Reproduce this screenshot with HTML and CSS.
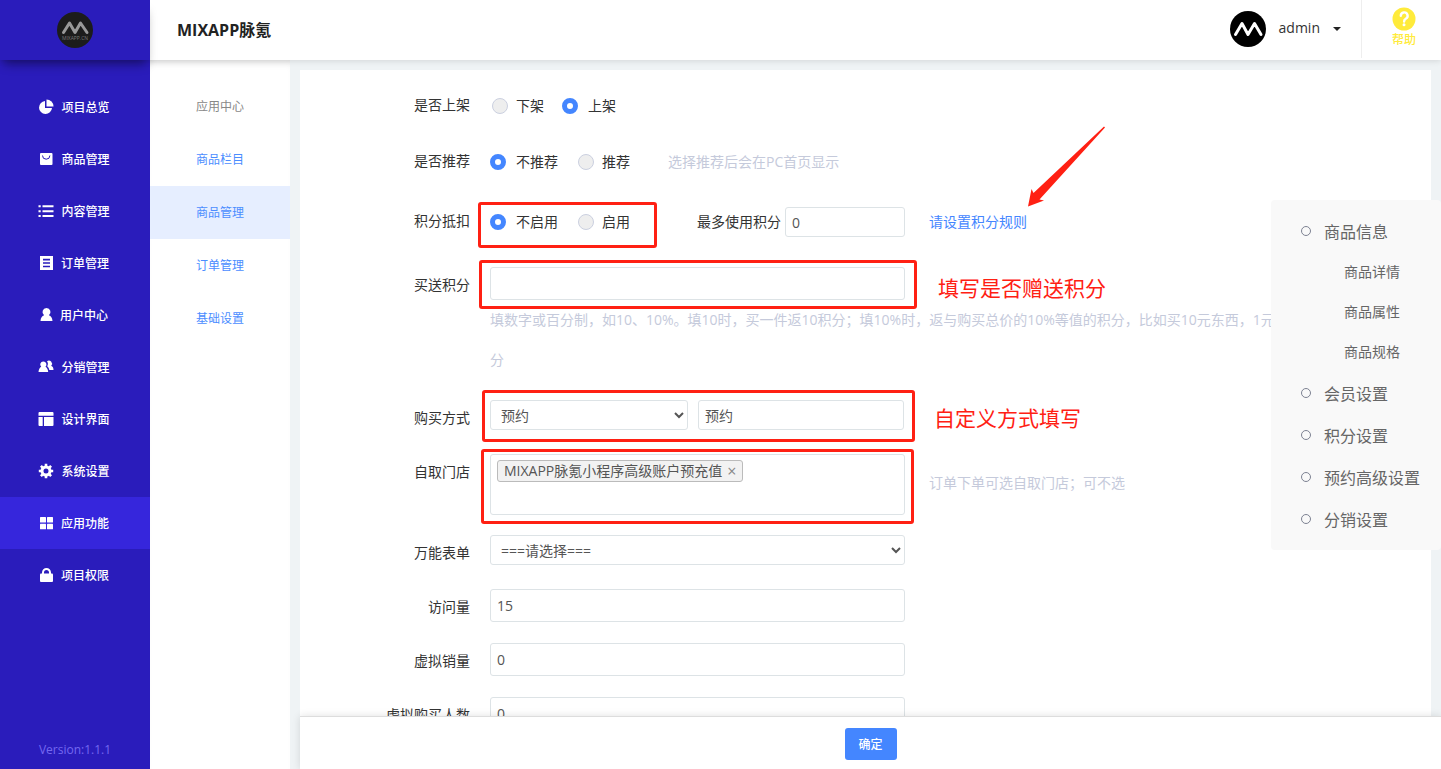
FILE: index.html
```html
<!DOCTYPE html>
<html lang="zh-CN">
<head>
<meta charset="utf-8">
<title>MIXAPP脉氪</title>
<link rel="stylesheet" href="styles.css">
</head>
<body>
<div class="app">
  <header class="topbar">
    <a class="brand" href="#" aria-label="MIXAPP">
      <svg width="36" height="36" viewBox="0 0 36 36">
        <circle cx="18" cy="18" r="18" fill="#1c1c1c"/>
        <path d="M6.500 20.500L12.500 11L18 20.500L23.500 11L30 20.500" fill="none" stroke="#999" stroke-width="3" stroke-linejoin="round" stroke-linecap="round"/>
        <text class="brand-caption" x="18" y="28" text-anchor="middle">MIXAPP.CN</text>
      </svg>
    </a>
    <h1 class="title">MIXAPP脉氪</h1>
    <button class="user" type="button">
      <svg width="36" height="36" viewBox="0 0 36 36">
        <circle cx="18" cy="18" r="18" fill="#000"/>
        <path d="M5.500 23.500L12 12.500L18 23.500L24.500 12.500L31 23.500" fill="none" stroke="#fff" stroke-width="3" stroke-linejoin="round" stroke-linecap="round"/>
      </svg>
      <span>admin</span>
      <i class="caret"></i>
    </button>
    <a class="help" href="#">
      <svg width="24" height="24" viewBox="0 0 24 24">
        <circle cx="12" cy="12" r="11.500" fill="#ffeb3b"/>
        <path d="M8.800 8.800a3.400 3.400 0 1 1 5 3c-1.200.700-1.700 1.200-1.700 2.700" fill="none" stroke="#fff" stroke-width="2.400" stroke-linecap="round"/>
        <circle cx="12" cy="17.800" r="1.500" fill="#fff"/>
      </svg>
      <span>帮助</span>
    </a>
  </header>

  <nav class="sidebar">
    <ul class="menu">
      <li><a href="#"><svg width="16" height="16" viewBox="0 0 16 16"><path d="M7 2a6.500 6.500 0 1 0 7 7H7z"/><path d="M8.500.500v7h7a7 7 0 0 0-7-7z"/></svg>项目总览</a></li>
      <li><a href="#"><svg width="16" height="16" viewBox="0 0 16 16"><rect x="2" y="2" width="12.500" height="12" rx="1"/><path d="M4.500 4.500a3.700 3.700 0 0 0 7.400 0" fill="none" stroke="#2a1cbb"/></svg>商品管理</a></li>
      <li><a href="#"><svg width="16" height="16" viewBox="0 0 16 16"><path d="M.500 2.300h2.200v2H.500zM4.500 2.300h11v2h-11zM.500 7.200h2.200v2H.500zM4.500 7.200h11v2h-11zM.500 12h2.200v2H.500zM4.500 12h11v2h-11z"/></svg>内容管理</a></li>
      <li><a href="#"><svg width="15" height="16" viewBox="0 0 15 16"><path fill-rule="evenodd" d="M1 1h13v14H1zM4 3.800v1.600h7V3.800zM4 7.200v1.600h7V7.200zM4 10.700v1.600h7v-1.600z"/></svg>订单管理</a></li>
      <li><a href="#"><svg width="13" height="16" viewBox="0 0 13 16"><path d="M6.500 1a4 4 0 0 1 2.400 7.200C11 9 12.300 10.500 12.500 14H.500c.2-3.500 1.500-5 3.600-5.800A4 4 0 0 1 6.500 1z"/></svg>用户中心</a></li>
      <li><a href="#"><svg width="16" height="16" viewBox="0 0 16 16"><path d="M5.500 2.500a3 3 0 0 1 2 5.200c1.500.7 2.500 2.600 2.700 5.300H.500c.2-2.700 1.200-4.600 2.700-5.300a3 3 0 0 1 2.300-5.200z"/><path d="M9 2.200a3.100 3.100 0 0 1 4.200 4.500c1.600.7 2.300 2.200 2.300 4.300h-4.200C11 9 10.200 8 9.200 7.200 10.200 5.500 10.200 3.700 9 2.200z"/></svg>分销管理</a></li>
      <li><a href="#"><svg width="16" height="16" viewBox="0 0 16 16"><path d="M1.500 1h13a1 1 0 0 1 1 1v2.700H.500V2a1 1 0 0 1 1-1zM.500 6H4.700v9H1.500a1 1 0 0 1-1-1zM6 6h9.500v8a1 1 0 0 1-1 1H6z"/></svg>设计界面</a></li>
      <li><a href="#"><svg width="16" height="16" viewBox="0 0 16 16"><circle cx="8" cy="8" r="4" fill="none" stroke="#fff" stroke-width="3"/><path d="M8 .8v3M8 12.200v3M.8 8h3M12.200 8h3M2.900 2.900l2 2M11.100 11.100l2 2M2.900 13.100l2-2M11.100 4.900l2-2" stroke="#fff" stroke-width="2.600"/></svg>系统设置</a></li>
      <li class="active"><a href="#"><svg width="15" height="16" viewBox="0 0 15 16"><rect x="1" y="2" width="6" height="5.500" rx=".5"/><rect x="8" y="2" width="6" height="5.500" rx=".5"/><rect x="1" y="8.800" width="6" height="5.500" rx=".5"/><rect x="8" y="8.800" width="6" height="5.500" rx=".5"/></svg>应用功能</a></li>
      <li><a href="#"><svg width="15" height="16" viewBox="0 0 15 16"><rect x="1" y="6.500" width="13" height="8.500" rx="1"/><path d="M4 7V5.500a3.500 3.500 0 0 1 7 0V7" fill="none" stroke="#fff" stroke-width="2"/></svg>项目权限</a></li>
    </ul>
    <p class="version">Version:1.1.1</p>
  </nav>

  <nav class="subnav">
    <h2>应用中心</h2>
    <a href="#">商品栏目</a>
    <a class="active" href="#">商品管理</a>
    <a href="#">订单管理</a>
    <a href="#">基础设置</a>
  </nav>

  <main class="main">
    <form class="card">
      <div class="row">
        <span class="label">是否上架</span>
        <div class="field">
          <label class="radio"><input type="radio" name="sale">下架</label>
          <label class="radio"><input type="radio" name="sale" checked>上架</label>
        </div>
      </div>
      <div class="row row-recommend">
        <span class="label">是否推荐</span>
        <div class="field">
          <label class="radio"><input type="radio" name="recommend" checked>不推荐</label>
          <label class="radio"><input type="radio" name="recommend">推荐</label>
          <span class="hint hint-recommend">选择推荐后会在PC首页显示</span>
        </div>
      </div>
      <div class="row row-points">
        <span class="label">积分抵扣</span>
        <div class="field">
          <label class="radio"><input type="radio" name="points" checked>不启用</label>
          <label class="radio"><input type="radio" name="points">启用</label>
          <label class="inline-label" for="max-points">最多使用积分</label>
          <input class="input input-small" id="max-points" type="text" value="0">
          <a class="rule-link" href="#">请设置积分规则</a>
        </div>
      </div>
      <div class="row">
        <label class="label" for="gift">买送积分</label>
        <div>
          <input class="input input-wide" id="gift" type="text">
          <p class="hint hint-block">填数字或百分制，如10、10%。填10时，买一件返10积分；填10%时，返与购买总价的10%等值的积分，比如买10元东西，1元<br>分</p>
        </div>
      </div>
      <div class="row">
        <label class="label" for="way">购买方式</label>
        <div class="pair">
          <select class="input input-select" id="way"><option>预约</option></select>
          <input class="input input-short" type="text" value="预约" aria-label="自定义购买方式">
        </div>
      </div>
      <div class="row row-store">
        <span class="label">自取门店</span>
        <div class="store">
          <div class="tags">
            <span class="tag">MIXAPP脉氪小程序高级账户预充值<button type="button" aria-label="移除">×</button></span>
          </div>
          <span class="hint hint-store">订单下单可选自取门店；可不选</span>
        </div>
      </div>
      <div class="row">
        <label class="label" for="form">万能表单</label>
        <div><select class="input input-wide input-select" id="form"><option>===请选择===</option></select></div>
      </div>
      <div class="row">
        <label class="label" for="visits">访问量</label>
        <div><input class="input input-wide" id="visits" type="text" value="15"></div>
      </div>
      <div class="row">
        <label class="label" for="sales">虚拟销量</label>
        <div><input class="input input-wide" id="sales" type="text" value="0"></div>
      </div>
      <div class="row">
        <label class="label" for="buyers">虚拟购买人数</label>
        <div><input class="input input-wide" id="buyers" type="text" value="0"></div>
      </div>

      <div class="mark mark-points"></div>
      <div class="mark mark-gift"></div>
      <div class="mark mark-way"></div>
      <div class="mark mark-store"></div>
      <span class="note note-gift">填写是否赠送积分</span>
      <span class="note note-way">自定义方式填写</span>
      <svg class="arrow" width="80" height="82" viewBox="0 0 80 82"><path d="M77 .5L78 1.500L12.500 73.500L17 74.500L1 80.500L4.500 63L6.500 67Z"/></svg>
    </form>
    <footer class="actions"><button class="submit" type="button">确定</button></footer>
  </main>

  <nav class="anchors">
    <a class="anchor" href="#">商品信息</a>
    <a class="sub" href="#">商品详情</a>
    <a class="sub" href="#">商品属性</a>
    <a class="sub" href="#">商品规格</a>
    <a class="anchor" href="#">会员设置</a>
    <a class="anchor" href="#">积分设置</a>
    <a class="anchor" href="#">预约高级设置</a>
    <a class="anchor" href="#">分销设置</a>
  </nav>
</div>
</body>
</html>
```
FILE: styles.css
```css
*, *::before { box-sizing: border-box; }

body {
  margin: 0;
  font-family: "Open Sans", "Noto Sans CJK SC", sans-serif;
  font-size: 14px;
  color: #333;
}

a { text-decoration: none; color: inherit; }
ul, p, h1, h2 { margin: 0; padding: 0; list-style: none; font-weight: normal; }
button, input, select { font: inherit; }

.app {
  display: grid;
  grid-template: 60px minmax(0, 1fr) / 150px 140px minmax(0, 1fr);
  height: 100vh;
  overflow: hidden;
  background: #eff3f5;
}

/* Header */
.topbar {
  grid-column: 1 / -1;
  display: flex;
  z-index: 2;
  background: #fff;
  box-shadow: 0 1px 6px rgba(0, 0, 0, .12);
}
.brand {
  display: flex;
  align-items: center;
  justify-content: center;
  width: 150px;
  background: #2a1cbb;
  box-shadow: 0 8px 10px -4px rgba(0, 0, 0, .4);
}
.brand-caption { font-size: 5px; fill: #777; }
.title {
  flex: 1;
  padding-left: 27px;
  line-height: 60px;
  font-size: 16px;
  font-weight: bold;
  color: #222;
}
.user {
  display: flex;
  align-items: center;
  gap: 13px;
  height: 58px;
  padding: 0 20px 0 0;
  border: 0;
  border-right: 1px solid #eee;
  background: none;
  color: #333;
}
.user span { padding-bottom: 4px; }
.caret {
  border: 4px solid transparent;
  border-top-color: #222;
  border-bottom: 0;
}
.help {
  display: flex;
  flex-direction: column;
  align-items: center;
  width: 79px;
  padding: 7px 0 0 5px;
  font-size: 12px;
  font-weight: 500;
  line-height: 18px;
  color: #ffeb3b;
}

/* Primary menu */
.sidebar {
  display: flex;
  flex-direction: column;
  justify-content: space-between;
  padding-top: 21px;
  background: #2a1cbb;
}
.menu a {
  display: flex;
  align-items: center;
  justify-content: center;
  gap: 7px;
  height: 52px;
  padding-right: 2px;
  font-size: 12px;
  font-weight: 500;
  color: #fff;
}
.menu svg { fill: #fff; }
.menu .active { background: #3626dc; }
.version {
  padding-bottom: 10px;
  text-align: center;
  font-size: 12px;
  line-height: 18px;
  color: #7468f0;
}

/* Secondary menu */
.subnav {
  padding-top: 20px;
  background: #fff;
  font-size: 12px;
  line-height: 53px;
  text-align: center;
  color: #4b8dff;
  box-shadow: inset 0 8px 8px -6px rgba(0, 0, 0, .12);
}
.subnav h2 { font-size: 12px; color: #888; }
.subnav a { display: block; }
.subnav .active { background: #e6eeff; }

/* Form */
.main {
  display: flex;
  flex-direction: column;
  padding: 10px 0 0 10px;
  min-height: 0;
}
.card {
  position: relative;
  flex: 1;
  min-height: 0;
  overflow: hidden;
  margin-right: 10px;
  padding-top: 17px;
  background: #fff;
}
.row {
  display: grid;
  grid-template-columns: 170px minmax(0, 1fr);
  column-gap: 20px;
  min-height: 36px;
  margin-bottom: 18px;
}
.row-recommend { min-height: 42px; }
.row-points { min-height: 46px; }
.row-store { min-height: 63px; }
.label { line-height: 36px; text-align: right; }
.field { display: flex; align-items: center; height: 38px; }
.radio { display: flex; align-items: center; gap: 10px; line-height: 18px; }
.radio + .radio { margin-left: 18px; }
.radio:has(input:not(:checked)) { gap: 8px; padding-left: 2px; }
.radio input {
  appearance: none;
  width: 16px;
  height: 16px;
  margin: 0;
  border: 1px solid #cbd0e0;
  border-radius: 50%;
  background: #eee;
}
.radio input:checked { border: 5px solid #4486ff; background: #fff; }
.hint { color: #c5cadb; }
.hint-recommend { margin-left: 38px; }
.hint-block { padding-bottom: 2px; line-height: 40px; white-space: nowrap; }
.hint-store { padding-bottom: 6px; }
.inline-label { margin: 0 4px 0 67px; }
.rule-link { margin-left: 24px; color: #4486ff; }
.hint-recommend, .inline-label, .rule-link { padding-bottom: 2px; }

.input {
  display: block;
  height: 33px;
  padding: 0 6px;
  border: 1px solid #dde3e6;
  border-radius: 3px;
  background: #fff;
  color: #555;
}
.input-wide { width: 415px; }
.input-small { width: 120px; height: 30px; }
.input-short { width: 206px; height: 30px; }
.input-select { height: 30px; }
.pair { display: flex; gap: 10px; }
.pair .input-select { width: 198px; }

.store { display: flex; align-items: center; gap: 24px; height: 61px; }
.tags {
  width: 415px;
  height: 61px;
  padding: 5px 6px;
  border: 1px solid #dde3e6;
  border-radius: 3px;
}
.tag {
  display: inline-flex;
  align-items: center;
  gap: 5px;
  height: 22px;
  padding: 0 6px;
  border: 1px solid #bbb;
  border-radius: 3px;
  background: #f2f2f2;
  color: #555;
  line-height: 18px;
}
.tag button { padding: 0; border: 0; background: none; color: #888; font-size: 16px; line-height: 18px; }

/* Annotations */
.mark { position: absolute; border: 3px solid #ff2013; border-radius: 3px; }
.mark-points { left: 178px; top: 132px; width: 179px; height: 46px; }
.mark-gift { left: 179px; top: 190px; width: 438px; height: 49px; }
.mark-way { left: 182px; top: 320px; width: 433px; height: 52px; }
.mark-store { left: 181px; top: 379px; width: 433px; height: 75px; }
.note { position: absolute; font-size: 21px; line-height: 30px; color: #ff2013; }
.note-gift { left: 638px; top: 203px; }
.note-way { left: 634px; top: 333px; }
.arrow { position: absolute; left: 727px; top: 56px; fill: #ff2013; }

.actions {
  z-index: 1;
  padding: 11px 0 9px;
  border-top: 1px solid #ddd;
  background: #fff;
  text-align: center;
  box-shadow: 0 0 8px rgba(0, 0, 0, .12);
}
.submit {
  width: 52px;
  height: 32px;
  padding: 0;
  border: 0;
  border-radius: 3px;
  background: #4486ff;
  color: #fff;
  font-size: 12px;
  font-weight: 500;
}

/* Section anchors */
.anchors {
  position: fixed;
  z-index: 3;
  top: 200px;
  right: 0;
  width: 170px;
  padding: 10px 0;
  border-radius: 4px;
  background: #f9f9f9;
  color: #666;
}
.anchor {
  display: flex;
  align-items: center;
  gap: 13px;
  height: 42px;
  padding-left: 30px;
  font-size: 16px;
}
.anchor::before {
  content: "";
  width: 10px;
  height: 10px;
  border: 1px solid #7d8292;
  border-radius: 50%;
}
.sub { display: block; padding-left: 73px; line-height: 40px; }
```
